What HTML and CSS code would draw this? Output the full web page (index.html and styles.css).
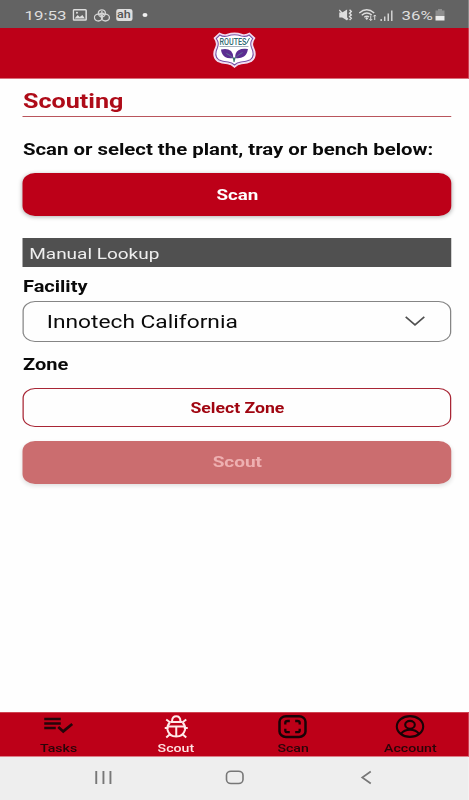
FILE: index.html
```html
<!DOCTYPE html>
<html lang="en">
<head>
    <meta charset="UTF-8">
    <meta name="viewport" content="width=device-width, initial-scale=1.0">
    <title>Scouting</title>
    <link rel="stylesheet" href="styles.css">
</head>
<body>
    <div class="screen">
        <div class="status-bar">
            <span class="time">19:53</span>
            <svg class="icon-image" viewBox="0 0 14 12" preserveAspectRatio="none">
                <rect x="0.8" y="0.8" width="12.4" height="10.2" rx="0.8" fill="none" stroke="#dedede" stroke-width="1.5"/>
                <path d="M2 9.500L5 6l2 2 2.500-2L12 9.500z" fill="#dedede"/>
                <circle cx="4.300" cy="3.700" r="1" fill="#dedede"/>
            </svg>
            <svg class="icon-circles" viewBox="0 0 16 13" preserveAspectRatio="none">
                <g fill="none" stroke="#d4d4d4" stroke-width="1.3">
                    <circle cx="8" cy="4.300" r="3.500"/>
                    <ellipse cx="4.500" cy="8.600" rx="3.900" ry="3.400"/>
                    <ellipse cx="11.500" cy="8.600" rx="3.900" ry="3.400"/>
                    <path d="M8 2v8M5.500 4.500h5"/>
                </g>
            </svg>
            <span class="badge">ah</span>
            <span class="dot"></span>
            <div class="status-right">
                <svg class="icon-mute" viewBox="0 0 14 12" preserveAspectRatio="none">
                    <path d="M0.500 3.500h3L8.500 0.500v11L3.500 8.500h-3z" fill="#dedede"/>
                    <path d="M0.500 1l9 9.500" stroke="#dedede" stroke-width="1.300"/>
                    <path d="M11 0.800l1.800 1.700L11 4.200l1.800 1.700L11 7.600l1.800 1.700L11 11" fill="none" stroke="#dedede" stroke-width="1.400"/>
                </svg>
                <svg class="icon-wifi" viewBox="0 0 18 12" preserveAspectRatio="none">
                    <path d="M0.500 4Q8 -2.500 15.500 4M3 6.200Q8 2 13 6M5.500 8.300Q8 6.200 10.300 8" fill="none" stroke="#dedede" stroke-width="1.400"/>
                    <path d="M8 8l1.500 1.500L8 11 6.500 9.500z" fill="#dedede"/>
                    <path d="M12 6.500v5M10.500 10l1.500 1.500 1.500-1.500M16 11V6M14.500 7.500L16 6l1.500 1.500" fill="none" stroke="#dedede"/>
                </svg>
                <svg class="icon-signal" viewBox="0 0 14 11" preserveAspectRatio="none">
                    <path d="M1.200 9v2M4.800 6.500V11M8.400 3.500V11M12 0.500V11" stroke="#d4d4d4" stroke-width="1.500"/>
                </svg>
                <span class="percent">36%</span>
                <svg class="icon-battery" viewBox="0 0 10 12" preserveAspectRatio="none">
                    <path d="M3 0h4v1.500h2.500V7h-9V1.500H3z" fill="#8d8d8d"/>
                    <path d="M0.500 7h9v4.500h-9z" fill="#ececec"/>
                </svg>
            </div>
        </div>

        <header class="header">
            <svg class="logo" viewBox="0 0 44 36" preserveAspectRatio="none">
                <path d="M7 1.500Q11 4 15 2.500Q22 0 29 2.500Q33 4 37 1.500L42 6Q38.500 11 40.500 15Q45 24 39 29Q35 31 29 31.500Q25 32 22 35Q19 32 15 31.500Q9 31 5 29Q-1 24 3.500 15Q5.500 11 2 6z" fill="#fff" stroke="#f2dcf0" stroke-width="1.600"/>
                <path d="M7.300 3Q11 5.200 15 4Q22 1.500 29 4Q33 5.200 36.700 3L40.300 6.500Q37 11 39 15.500Q43 23.500 38 27.700Q34 29.500 28.500 30Q24.500 30.500 22 33Q19.500 30.500 15.500 30Q10 29.500 6 27.700Q1 23.500 5 15.500Q7 11 3.700 6.500z" fill="#fff" stroke="#7951a5" stroke-width="1.100"/>
                <text x="7" y="12.800" class="logo-text" textLength="27" lengthAdjust="spacingAndGlyphs">ROUTES</text>
                <path d="M34 11.800L37 6" stroke="#2f6b70" stroke-width="1"/>
                <path d="M7 14.500h29" stroke="#7f8fa0" stroke-width="0.700"/>
                <path d="M20.800 26Q16 27 12.500 25Q9 22.500 8.500 17.500Q15 16 18.500 19Q21 21.500 20.800 26z" fill="#5b2d91"/>
                <path d="M22.600 26Q22.500 20.500 26 18.300Q29 16.300 35.500 17Q34.500 22.500 31.500 24.500Q27.500 27 22.600 26z" fill="#5b2d91"/>
                <path d="M14 21.500Q19 23.500 21 27L21.600 30L22.500 26.500Q25 23 30 20.500" fill="none" stroke="#5f8f95" stroke-width="0.700"/>
                <path d="M20.300 25.500l1.200 5 1.600-5z" fill="#387669"/>
            </svg>
        </header>

        <main class="content">
            <h1>Scouting</h1>
            <p class="prompt">Scan or select the plant, tray or bench below:</p>
            <button class="btn btn-scan">Scan</button>
            <div class="section-title">Manual Lookup</div>
            <label class="label-facility">Facility</label>
            <div class="select">
                <span>Innotech California</span>
                <svg class="chevron" viewBox="0 0 20 10" preserveAspectRatio="none">
                    <path d="M0.700 0.800L10 8.800L19.300 0.800" fill="none" stroke="#505050" stroke-width="1.700"/>
                </svg>
            </div>
            <label class="label-zone">Zone</label>
            <button class="btn btn-outline">Select Zone</button>
            <button class="btn btn-scout" disabled>Scout</button>
        </main>

        <nav class="tabs">
            <a class="tab">
                <svg viewBox="0 0 30 24" preserveAspectRatio="none">
                    <path d="M0.500 4h16.500M0.500 8.500h16.500M0.500 13h11.500" stroke="#240509" stroke-width="2.300"/>
                    <path d="M14.500 12l5 4.400L28.500 9" fill="none" stroke="#240509" stroke-width="2.700"/>
                </svg>
                <span>Tasks</span>
            </a>
            <a class="tab active">
                <svg viewBox="0 0 30 24" preserveAspectRatio="none">
                    <g fill="none" stroke="#ffe9e9" stroke-width="2">
                        <path d="M10.800 6Q11 1.300 15 1.300Q19 1.300 19.200 6"/>
                        <path d="M9 7h12"/>
                        <path d="M8.500 7.500Q5.500 11 6.300 15Q8 21.500 15 21.500Q22 21.500 23.700 15Q24.500 11 21.500 7.500"/>
                        <path d="M7 11.500h16M15 11.500v9.500"/>
                        <path d="M5 4.500l4 3M25 4.500l-4 3M3.500 13h3M26.500 13h-3M5 22.500l4-3.500M25 22.500l-4-3.500"/>
                    </g>
                </svg>
                <span>Scout</span>
            </a>
            <a class="tab">
                <svg viewBox="0 0 30 24" preserveAspectRatio="none">
                    <rect x="2" y="1.300" width="26" height="20.600" rx="6.500" ry="5.500" fill="none" stroke="#180306" stroke-width="2.500"/>
                    <path d="M7.800 9.500V7.800Q7.800 6 10 6h2.300M17.700 6H20Q22.200 6 22.200 7.800V9.500M22.200 13.700v1.700Q22.200 17.200 20 17.200h-2.300M12.300 17.200H10Q7.800 17.200 7.800 15.400v-1.700" fill="none" stroke="#180306" stroke-width="2.300"/>
                </svg>
                <span>Scan</span>
            </a>
            <a class="tab">
                <svg viewBox="0 0 30 24" preserveAspectRatio="none">
                    <g fill="none" stroke="#180306" stroke-width="2.100">
                        <ellipse cx="15" cy="11.500" rx="13.200" ry="10.400"/>
                        <ellipse cx="15" cy="9.800" rx="4.800" ry="3.900"/>
                        <path d="M6 18.800Q9 14.800 15 14.800Q21 14.800 24 18.800"/>
                    </g>
                </svg>
                <span>Account</span>
            </a>
        </nav>

        <div class="system-bar">
            <svg viewBox="0 0 20 16" preserveAspectRatio="none">
                <path d="M2.500 1v13M9.700 1v13M16.700 1v13" stroke="#777" stroke-width="1.900"/>
            </svg>
            <svg viewBox="0 0 20 16" preserveAspectRatio="none">
                <rect x="1.500" y="1.300" width="16.500" height="12.200" rx="4.500" ry="4" fill="none" stroke="#777" stroke-width="1.600"/>
            </svg>
            <svg viewBox="0 0 20 16" preserveAspectRatio="none">
                <path d="M14.500 1.500L6 7.500l8.500 6" fill="none" stroke="#777" stroke-width="1.700"/>
            </svg>
        </div>
    </div>
</body>
</html>
```
FILE: styles.css
```css
* {
    box-sizing: border-box;
}
body {
    margin: 0;
    background-color: #fefefe;
    overflow: hidden;
}
.screen {
    width: 375.2px;
    height: 800px;
    transform: scaleX(1.25);
    transform-origin: 0 0;
    display: flex;
    flex-direction: column;
    font-family: Roboto, Arial, sans-serif;
    color: #0a0a0a;
}
svg {
    display: block;
    flex-shrink: 0;
}
.status-bar {
    height: 28px;
    padding: 2px 18.8px 0 19.6px;
    display: flex;
    align-items: center;
    background-color: #636363;
    color: #dedede;
    font-size: 13.5px;
}
.time {
    width: 38.8px;
}
.icon-image {
    width: 11.6px;
    height: 12px;
}
.icon-circles {
    width: 13px;
    height: 13px;
    margin-left: 5px;
}
.badge {
    width: 13px;
    height: 12px;
    margin-left: 4.6px;
    border-radius: 2px;
    background-color: #dedede;
    color: #555;
    font-size: 10px;
    font-weight: 500;
    line-height: 12px;
    text-align: center;
}
.dot {
    width: 4px;
    height: 4px;
    margin-left: 8.8px;
    border-radius: 50%;
    background-color: #f0f0f0;
}
.status-right {
    margin-left: auto;
    display: flex;
    align-items: center;
}
.icon-mute {
    width: 11px;
    height: 12px;
}
.icon-wifi {
    width: 14.4px;
    height: 12px;
    margin-left: 4.4px;
}
.icon-signal {
    width: 11px;
    height: 11px;
    margin-left: 3px;
}
.percent {
    width: 26.2px;
    margin-left: 6.2px;
}
.icon-battery {
    width: 8px;
    height: 12px;
    margin-left: 1px;
}
.header {
    height: 51px;
    padding-top: 4px;
    display: flex;
    justify-content: center;
    background-color: #bd0018;
    border-bottom: 1px solid #d9707c;
}
.logo {
    width: 35.2px;
    height: 36px;
}
.logo-text {
    font-size: 8.8px;
    font-weight: 500;
    fill: #2f6b70;
}
.content {
    flex: 1;
    padding: 0 13.8px 0 18.4px;
    display: flex;
    flex-direction: column;
}
h1 {
    height: 38px;
    margin: 0;
    padding-top: 10px;
    border-bottom: 1px solid #b9555c;
    color: #ae0b18;
    font-size: 20.1px;
    line-height: 24px;
}
.prompt {
    margin: 23px 0 0;
    height: 33px;
    font-size: 16.3px;
    font-weight: bold;
    line-height: 20px;
    white-space: nowrap;
}
.btn {
    border: none;
    border-radius: 10px;
    font-family: inherit;
    font-weight: bold;
    flex-shrink: 0;
}
.btn-scan {
    height: 43px;
    background-color: #bd0018;
    color: #fff;
    font-size: 15px;
    box-shadow: 0 1px 4px rgba(0,0,0,0.3);
}
.section-title {
    height: 29px;
    margin-top: 22px;
    padding-left: 5px;
    background-color: #505050;
    color: #eee;
    font-size: 15.2px;
    line-height: 32px;
}
.label-facility,
.label-zone {
    font-size: 16px;
    font-weight: bold;
    line-height: 20px;
}
.label-facility {
    height: 33.5px;
    padding-top: 10px;
}
.select {
    height: 41px;
    padding: 0 20.6px 0 18px;
    display: flex;
    align-items: center;
    justify-content: space-between;
    border: 1px solid #858585;
    border-radius: 10px;
    font-size: 18.2px;
}
.chevron {
    width: 16px;
    height: 10px;
}
.label-zone {
    height: 46.5px;
    padding-top: 13.5px;
}
.btn-outline {
    height: 39px;
    border: 1px solid #a82635;
    background-color: #fefefe;
    color: #a00510;
    font-size: 14.1px;
}
.btn-scout {
    height: 43px;
    margin-top: 13.5px;
    background-color: #cb6d6f;
    color: #eeb0b1;
    font-size: 15.2px;
    box-shadow: 0 2px 4px rgba(0,0,0,0.12);
}
.tabs {
    height: 45px;
    display: flex;
    background-color: #bd0018;
    border-top: 1px solid #cf4350;
    border-bottom: 1px solid #dc7e88;
}
.tab {
    flex: 1;
    padding-top: 2px;
    display: flex;
    flex-direction: column;
    align-items: center;
    color: #2a0509;
    font-size: 11.3px;
    font-weight: 500;
    line-height: 14px;
}
.tab svg {
    width: 24px;
    height: 24px;
    margin-bottom: 3px;
}
.tab.active {
    color: #ffe3e3;
}
.system-bar {
    height: 43px;
    padding: 13px 0 0 1px;
    display: flex;
    justify-content: center;
    gap: 88.8px;
    background-color: #eee;
}
.system-bar svg {
    width: 16px;
    height: 16px;
}
```
